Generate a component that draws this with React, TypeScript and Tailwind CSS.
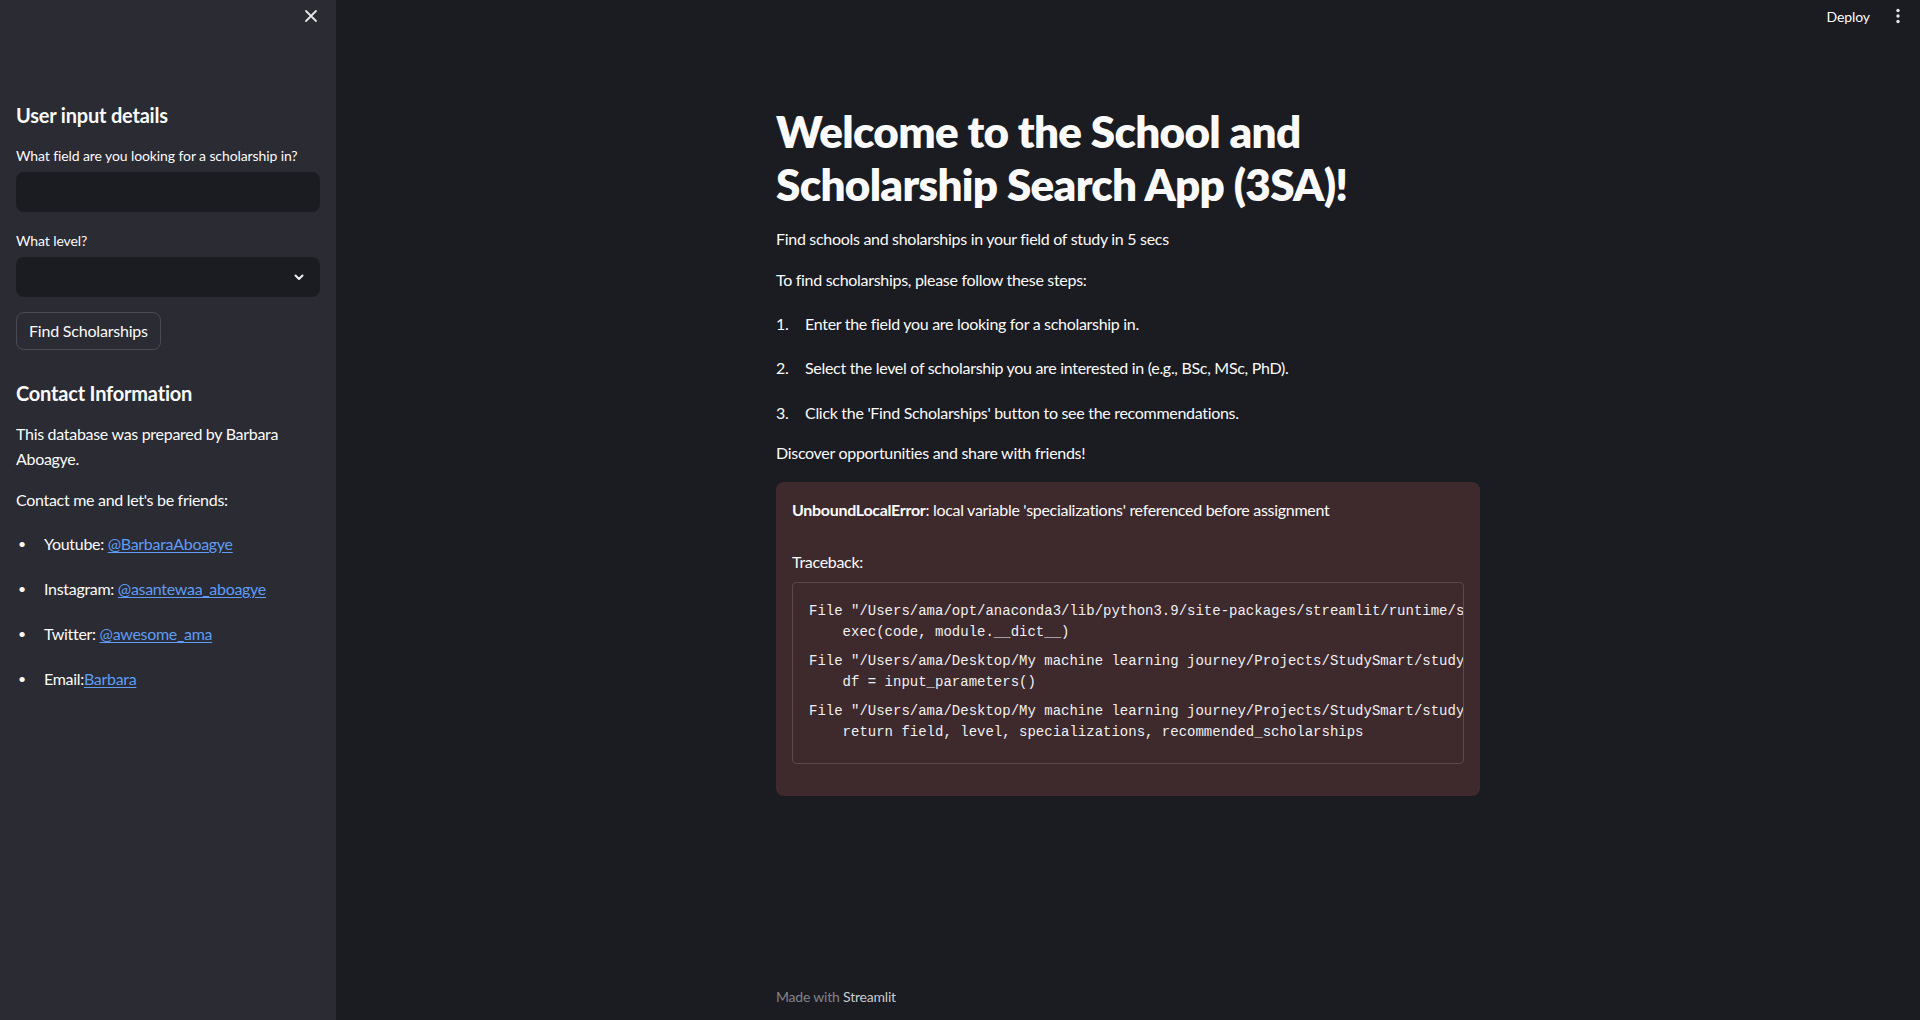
import React from "react";

const sans = { fontFamily: '"Lato", "Noto Sans", sans-serif' };

function CloseIcon() {
  return (
    <svg width="16" height="16" viewBox="0 0 16 16" fill="none" stroke="#e6e6ea" strokeWidth="1.8" strokeLinecap="round">
      <path d="M3 3 L13 13 M13 3 L3 13" />
    </svg>
  );
}

function Chevron() {
  return (
    <svg width="14" height="14" viewBox="0 0 14 14" fill="none" stroke="#f0f0f2" strokeWidth="2" strokeLinecap="round" strokeLinejoin="round">
      <path d="M3.5 5.5 L7 9 L10.5 5.5" />
    </svg>
  );
}

function Link({ children }: { children: React.ReactNode }) {
  return <a className="text-[#5e9cf5] underline underline-offset-2 cursor-pointer">{children}</a>;
}

const mono = { fontFamily: '"Liberation Mono", "DejaVu Sans Mono", monospace' };

export default function App() {
  return (
    <div className="flex h-[1020px] w-[1920px] overflow-hidden bg-[#1b1c21] text-[#fafafa]" style={sans}>
      {/* Sidebar */}
      <aside className="w-[336px] shrink-0 bg-[#2a2b33] px-4 flex flex-col">
        <div className="flex justify-end pt-[8px] pr-[1px] h-[32px]">
          <CloseIcon />
        </div>
        <h2 className="mt-[70px] text-[20px] font-bold leading-[26px] tracking-[-0.2px]">User input details</h2>
        <label className="mt-[19px] text-[14px] leading-[18px] tracking-[-0.1px]">What field are you looking for a scholarship in?</label>
        <div className="mt-[7px] h-[40px] rounded-lg bg-[#1b1c21]" />
        <label className="mt-[20px] text-[14px] leading-[18px] tracking-[-0.1px]">What level?</label>
        <div className="mt-[7px] h-[40px] rounded-lg bg-[#1b1c21] flex items-center justify-end pr-[14px]">
          <Chevron />
        </div>
        <div className="mt-[15px]">
          <button className="h-[38px] px-[12px] rounded-lg border border-[#4a4b55] bg-[#2a2b33] text-[16px] tracking-[-0.2px]">
            Find Scholarships
          </button>
        </div>
        <h2 className="mt-[30px] text-[20px] font-bold leading-[26px] tracking-[-0.2px]">Contact Information</h2>
        <p className="mt-[15px] text-[16px] leading-[25px] tracking-[-0.3px]">
          This database was prepared by Barbara Aboagye.
        </p>
        <p className="mt-[16px] text-[16px] leading-[25px] tracking-[-0.3px]">Contact me and let's be friends:</p>
        <ul className="mt-[19px] flex flex-col gap-[20px] text-[16px] leading-[25px] tracking-[-0.3px]">
          <li className="flex items-center">
            <span className="w-[28px] pl-[2px] text-[14px]">•</span>
            <span>Youtube: <Link>@BarbaraAboagye</Link></span>
          </li>
          <li className="flex items-center">
            <span className="w-[28px] pl-[2px] text-[14px]">•</span>
            <span>Instagram: <Link>@asantewaa_aboagye</Link></span>
          </li>
          <li className="flex items-center">
            <span className="w-[28px] pl-[2px] text-[14px]">•</span>
            <span>Twitter: <Link>@awesome_ama</Link></span>
          </li>
          <li className="flex items-center">
            <span className="w-[28px] pl-[2px] text-[14px]">•</span>
            <span>Email:<Link>Barbara</Link></span>
          </li>
        </ul>
      </aside>

      {/* Main */}
      <main className="relative flex-1 flex flex-col">
        <header className="absolute top-0 right-0 flex items-center h-[32px] pr-[20px] gap-[26px]">
          <span className="text-[14px] tracking-[-0.1px]">Deploy</span>
          <svg width="4" height="16" viewBox="0 0 4 16" fill="#e6e6ea">
            <circle cx="2" cy="2.5" r="1.7" />
            <circle cx="2" cy="8" r="1.7" />
            <circle cx="2" cy="13.5" r="1.7" />
          </svg>
        </header>

        <div className="mx-auto w-[704px] flex flex-col">
          <h1 className="mt-[105px] text-[44px] font-extrabold leading-[53px] tracking-[-0.7px]">
            Welcome to the School and Scholarship Search App (3SA)!
          </h1>
          <p className="mt-[15px] text-[16px] leading-[26px] tracking-[-0.3px]">
            Find schools and sholarships in your field of study in 5 secs
          </p>
          <p className="mt-[15px] text-[16px] leading-[26px] tracking-[-0.3px]">
            To find scholarships, please follow these steps:
          </p>
          <ol className="mt-[18px] flex flex-col text-[16px] leading-[26px] tracking-[-0.3px]">
            <li className="flex">
              <span className="w-[29px]">1.</span>
              <span>Enter the field you are looking for a scholarship in.</span>
            </li>
            <li className="flex mt-[18px]">
              <span className="w-[29px]">2.</span>
              <span>Select the level of scholarship you are interested in (e.g., BSc, MSc, PhD).</span>
            </li>
            <li className="flex mt-[19px]">
              <span className="w-[29px]">3.</span>
              <span>Click the 'Find Scholarships' button to see the recommendations.</span>
            </li>
          </ol>
          <p className="mt-[14px] text-[16px] leading-[26px] tracking-[-0.3px]">
            Discover opportunities and share with friends!
          </p>

          <div className="mt-[16px] rounded-lg bg-[#3e292d] px-4 pt-[15px] pb-[32px] text-[#fafafa]">
            <p className="text-[16px] leading-[26px] tracking-[-0.3px]">
              <span className="font-bold">UnboundLocalError</span>: local variable 'specializations' referenced before assignment
            </p>
            <p className="mt-[26px] text-[16px] leading-[26px] tracking-[-0.3px]">Traceback:</p>
            <div className="mt-[7px] overflow-x-auto rounded-[4px] border border-[#5b4a4d] px-4 pt-[18px] pb-[20px] [scrollbar-width:none]">
              <pre className="text-[14px] leading-[21px] whitespace-pre text-[#f0f0f2]" style={mono}>
{`File "/Users/ama/opt/anaconda3/lib/python3.9/site-packages/streamlit/runtime/scriptrunner/script_runner.py"
    exec(code, module.__dict__)`}
              </pre>
              <pre className="mt-[8px] text-[14px] leading-[21px] whitespace-pre text-[#f0f0f2]" style={mono}>
{`File "/Users/ama/Desktop/My machine learning journey/Projects/StudySmart/study_smart.py"
    df = input_parameters()`}
              </pre>
              <pre className="mt-[8px] text-[14px] leading-[21px] whitespace-pre text-[#f0f0f2]" style={mono}>
{`File "/Users/ama/Desktop/My machine learning journey/Projects/StudySmart/study_smart.py"
    return field, level, specializations, recommended_scholarships`}
              </pre>
            </div>
          </div>
        </div>

        <footer className="mt-auto mx-auto w-[704px] pb-[14px] text-[14px] leading-[18px] tracking-[-0.2px]">
          <span className="text-[#82838c]">Made with </span>
          <span className="text-[#c9cace]">Streamlit</span>
        </footer>
      </main>
    </div>
  );
}
